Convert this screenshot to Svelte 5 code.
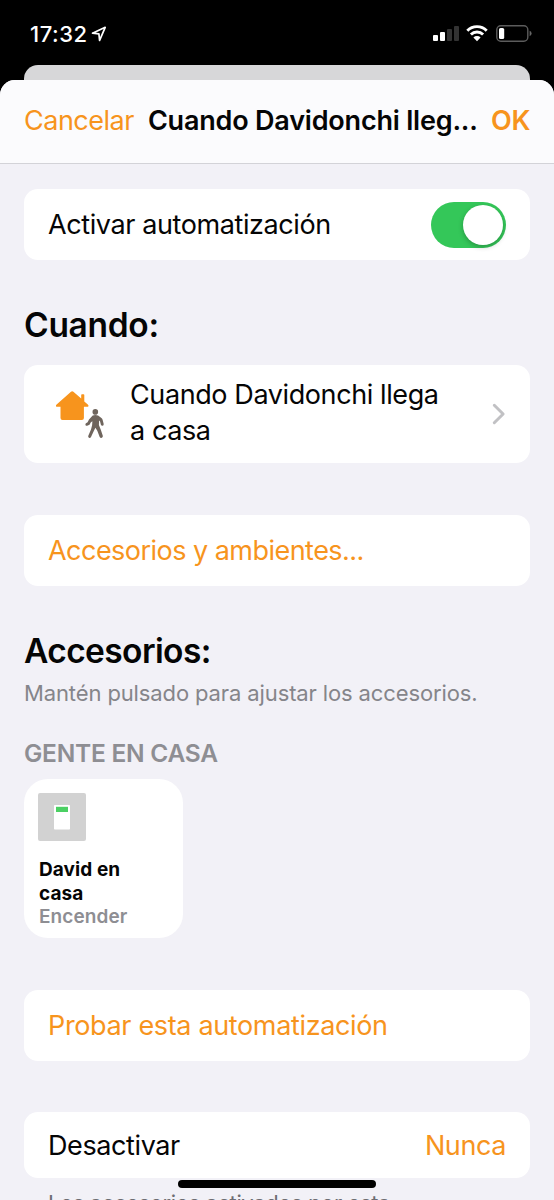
<script lang="ts">
	let enabled = true;

	const bars = [
		{ height: 6, on: true },
		{ height: 9, on: true },
		{ height: 12, on: false },
		{ height: 15, on: false }
	];

	const accessories = [{ name: 'David en casa', action: 'Encender' }];

	function toggleEnabled() {
		enabled = !enabled;
	}
</script>

<div class="phone">
	<header class="status">
		<span class="time">17:32</span>
		<svg class="location" viewBox="0 0 16 16" width="16" height="16">
			<path d="M1.5 7.2 14.2 1.3 8.6 14.4 7.9 7.9Z" />
		</svg>
		<div class="indicators">
			<div class="signal">
				{#each bars as bar}
					<span class:off={!bar.on} style="height: {bar.height}px"></span>
				{/each}
			</div>
			<svg class="wifi" viewBox="0 0 22 17" width="22" height="17">
				<path class="arc" d="M1.3 5.7a13.7 13.7 0 0 1 19.4 0M4.9 9.5a8.6 8.6 0 0 1 12.2 0" />
				<path d="M7.4 12.5a5.3 5.3 0 0 1 7.2 0L11 16.2Z" />
			</svg>
			<svg class="battery" viewBox="0 0 36 17" width="36" height="17">
				<rect class="shell" x="0.8" y="0.8" width="31" height="15.4" rx="4" />
				<rect x="3" y="3" width="5.2" height="11" rx="1.6" />
				<path class="cap" d="M33.6 5.8q2 .8 2 2.7t-2 2.7Z" />
			</svg>
		</div>
	</header>

	<div class="behind"></div>

	<div class="sheet">
		<nav>
			<button class="link cancel">Cancelar</button>
			<h1>Cuando Davidonchi lleg...</h1>
			<button class="link ok">OK</button>
		</nav>

		<main>
			<div class="card row">
				<span class="activate">Activar automatización</span>
				<button
					class="switch"
					class:on={enabled}
					role="switch"
					aria-checked={enabled}
					aria-label="Activar automatización"
					on:click={toggleEnabled}
				>
					<span class="knob"></span>
				</button>
			</div>

			<h2 class="when">Cuando:</h2>
			<div class="card trigger">
				<svg class="arrive" viewBox="0 0 50 50" width="50" height="50">
					<path
						class="house"
						d="M15 2.8q1.200-1 2.400 0l7.800 6.800V6q0-.8.8-.8h1.500q.8 0 .8.8v6.500l3.500 3q1 .9.600 1.700t-1.500.6h-3V29q0 2-2 2H6.500q-2 0-2-2V17.800h-3q-1.100.2-1.500-.6t.6-1.700Z"
					/>
					<circle class="person" cx="39.300" cy="22.900" r="2.800" />
					<path
						class="person"
						d="M36.700 26.500q2.800-.8 5.400.1l3.300 2.400q.9.600 1.200 1.700l1.100 4.400q.1 1.500-1.100 1.700t-1.700-1l-.9-3.600-.9-.7-.2 4.600 1.900 4.700 2 6q.3 1.500-1 2t-2.100-.9l-2.400-6.200-1.900-3-1.600 3.400-2.800 6q-.8 1.300-2 .7t-.7-2l2.700-6.300 1.100-4.300.3-3.900-1.500 1-1.400 2.400-2.300 1.100q-1.300.3-1.700-.8t.5-1.800l1.600-.9 1.400-2.800Z"
					/>
				</svg>
				<p>Cuando Davidonchi llega<br />a casa</p>
				<svg class="chevron" viewBox="0 0 14 22" width="14" height="22">
					<path d="m2.300 2.300 8.800 8.700-8.800 8.700" />
				</svg>
			</div>

			<button class="card row link scenes">Accesorios y ambientes...</button>

			<h2 class="accessories">Accesorios:</h2>
			<p class="hint">Mantén pulsado para ajustar los accesorios.</p>
			<h3>GENTE EN CASA</h3>
			<div class="tiles">
				{#each accessories as item}
					<div class="tile">
						<svg viewBox="0 0 48 48" width="48" height="48">
							<rect width="48" height="48" rx="2" fill="#d2d2d2" />
							<rect x="16" y="12" width="16" height="24.5" rx="0.8" fill="#fff" />
							<rect x="18" y="13.8" width="12" height="5.2" fill="#4bd063" />
						</svg>
						<strong>{item.name}</strong>
						<span>{item.action}</span>
					</div>
				{/each}
			</div>

			<button class="card row link test">Probar esta automatización</button>

			<div class="card row off-row">
				<span class="disable">Desactivar</span>
				<span class="never">Nunca</span>
			</div>
			<p class="footnote">Los accesorios activados por esta</p>
		</main>
	</div>

	<div class="home-bar"></div>
</div>

<style>
	:global(body) {
		background: #000;
	}

	.phone {
		position: relative;
		display: flex;
		flex-direction: column;
		width: 554px;
		height: 1200px;
		overflow: hidden;
		background: #000;
		color: #050505;
		font-family: Inter, 'Liberation Sans', sans-serif;
		font-size: 27px;
		letter-spacing: -0.4px;
		line-height: 36px;
	}

	h1,
	h2,
	h3,
	p {
		margin: 0;
	}

	button {
		margin: 0;
		padding: 0;
		border: 0;
		background: none;
		font: inherit;
		letter-spacing: inherit;
		text-align: left;
		white-space: nowrap;
		cursor: pointer;
	}

	.link {
		color: #f7941d;
	}

	.status {
		display: flex;
		flex: none;
		align-items: center;
		box-sizing: border-box;
		height: 65px;
		padding: 2px 22px 0 30px;
		color: #fff;
	}

	.time {
		font-size: 22px;
		font-weight: 500;
		letter-spacing: 0.5px;
	}

	.location {
		margin-left: 4px;
		fill: none;
		stroke: #fff;
		stroke-width: 1.7;
		stroke-linejoin: round;
	}

	.indicators {
		display: flex;
		align-items: center;
		margin-left: auto;
	}

	.signal {
		display: flex;
		align-items: flex-end;
		gap: 2px;
		margin-right: 7px;
	}

	.signal span {
		width: 5px;
		border-radius: 1px;
		background: #fff;
	}

	.signal .off {
		background: #333;
	}

	.wifi,
	.battery {
		fill: #fff;
	}

	.wifi {
		margin-right: 8px;
	}

	.arc {
		fill: none;
		stroke: #fff;
		stroke-width: 2.9;
	}

	.shell {
		fill: none;
		stroke: #5c5c5c;
		stroke-width: 1.4;
	}

	.cap {
		fill: #666;
	}

	.behind {
		flex: none;
		height: 15px;
		margin: 0 24px;
		border-radius: 14px 14px 0 0;
		background: #d7d7d9;
	}

	.sheet {
		flex: 1;
		border-radius: 15px 15px 0 0;
		overflow: hidden;
		background: #f2f1f7;
	}

	nav {
		display: flex;
		align-items: center;
		box-sizing: border-box;
		height: 84px;
		padding: 0 24px 1px;
		border-bottom: 1px solid #d3d3d8;
		background: #fbfbfd;
	}

	.cancel {
		letter-spacing: -0.5px;
	}

	h1 {
		margin-left: 14px;
		font-size: 27px;
		font-weight: 600;
		letter-spacing: -0.2px;
		white-space: nowrap;
	}

	.ok {
		margin-left: auto;
		font-weight: 600;
	}

	main {
		display: flex;
		flex-direction: column;
		padding: 25px 24px 0;
	}

	.card {
		box-sizing: border-box;
		border-radius: 14px;
		background: #fff;
	}

	.row {
		display: flex;
		align-items: center;
		justify-content: space-between;
		height: 71px;
		padding: 0 24px;
	}

	.switch {
		box-sizing: border-box;
		width: 75px;
		height: 46px;
		padding: 3px;
		border-radius: 23px;
		background: #e9e9eb;
	}

	.switch.on {
		background: #34c759;
	}

	.knob {
		display: block;
		width: 40px;
		height: 40px;
		border-radius: 50%;
		background: #fff;
		box-shadow: 0 2px 5px rgba(0, 0, 0, 0.25);
	}

	.switch.on .knob {
		margin-left: 29px;
	}

	h2 {
		font-size: 33.5px;
		font-weight: 600;
		letter-spacing: -0.3px;
		line-height: 40px;
	}

	.when {
		margin: 45px 0 20px;
	}

	.trigger {
		display: flex;
		align-items: center;
		height: 98px;
		padding: 0 24px 0 32px;
	}

	.arrive {
		flex: none;
		margin-right: 24px;
	}

	.house {
		fill: #f7941d;
	}

	.person {
		fill: #6f655d;
	}

	.trigger p {
		padding-bottom: 2px;
		white-space: nowrap;
	}

	.chevron {
		margin-left: auto;
		fill: none;
		stroke: #c1c1c4;
		stroke-width: 3;
		stroke-linecap: round;
		stroke-linejoin: round;
	}

	.scenes {
		margin-top: 52px;
		letter-spacing: -0.53px;
	}

	.accessories {
		margin-top: 45px;
		letter-spacing: -0.6px;
	}

	.hint {
		margin-top: 6px;
		color: #85858a;
		font-size: 22px;
		letter-spacing: -0.12px;
		line-height: 32px;
		white-space: nowrap;
	}

	h3 {
		margin-top: 27px;
		color: #8e8e93;
		font-size: 24.5px;
		font-weight: 600;
		letter-spacing: -0.25px;
		line-height: 34px;
	}

	.tiles {
		display: flex;
		margin-top: 9px;
	}

	.tile {
		display: flex;
		flex-direction: column;
		box-sizing: border-box;
		width: 159px;
		height: 159px;
		padding: 14px 40px 0 15px;
		border-radius: 24px;
		background: #fff;
		font-size: 19px;
		letter-spacing: 0.08px;
		line-height: 24px;
	}

	.tile svg {
		margin: 0 0 17px -1px;
	}

	.tile strong {
		font-weight: 700;
	}

	.tile span {
		color: #8e8e93;
		font-weight: 600;
		line-height: 22px;
	}

	.test {
		margin-top: 52px;
		letter-spacing: -0.35px;
	}

	.off-row {
		height: 66px;
		margin-top: 51px;
		padding-top: 1px;
	}

	.never {
		color: #f7941d;
	}

	.footnote {
		margin: 10px 0 0 24px;
		color: #6d6d72;
		font-size: 22px;
		letter-spacing: -0.4px;
		line-height: 30px;
		white-space: nowrap;
	}

	/* Home indicator floats above the scrolling sheet */
	.home-bar {
		position: absolute;
		bottom: 12px;
		left: 50%;
		width: 198px;
		height: 8px;
		border-radius: 4px;
		background: #000;
		transform: translateX(-50%);
	}
</style>
